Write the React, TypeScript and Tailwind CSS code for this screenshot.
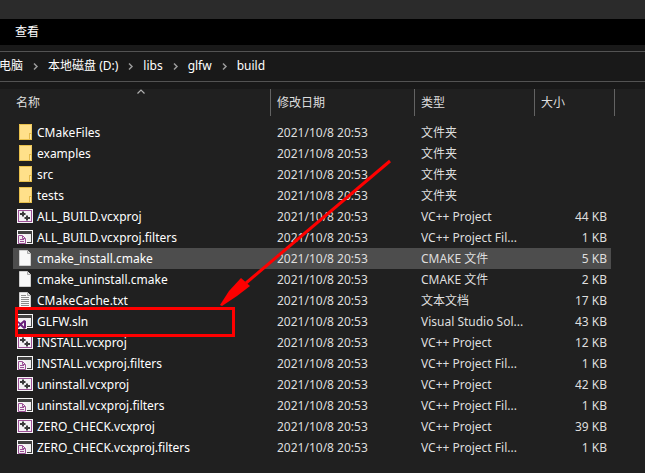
import React from 'react'

type FileKind = 'folder' | 'project' | 'filters' | 'blank' | 'text' | 'solution'

type FileEntry = {
  name: string
  kind: FileKind
  type: string
  size?: string
  hovered?: boolean
}

const MODIFIED = '2021/10/8 20:53'

const files: FileEntry[] = [
  { name: 'CMakeFiles', kind: 'folder', type: '文件夹' },
  { name: 'examples', kind: 'folder', type: '文件夹' },
  { name: 'src', kind: 'folder', type: '文件夹' },
  { name: 'tests', kind: 'folder', type: '文件夹' },
  { name: 'ALL_BUILD.vcxproj', kind: 'project', type: 'VC++ Project', size: '44 KB' },
  { name: 'ALL_BUILD.vcxproj.filters', kind: 'filters', type: 'VC++ Project Fil...', size: '1 KB' },
  { name: 'cmake_install.cmake', kind: 'blank', type: 'CMAKE 文件', size: '5 KB', hovered: true },
  { name: 'cmake_uninstall.cmake', kind: 'blank', type: 'CMAKE 文件', size: '2 KB' },
  { name: 'CMakeCache.txt', kind: 'text', type: '文本文档', size: '17 KB' },
  { name: 'GLFW.sln', kind: 'solution', type: 'Visual Studio Sol...', size: '43 KB' },
  { name: 'INSTALL.vcxproj', kind: 'project', type: 'VC++ Project', size: '12 KB' },
  { name: 'INSTALL.vcxproj.filters', kind: 'filters', type: 'VC++ Project Fil...', size: '1 KB' },
  { name: 'uninstall.vcxproj', kind: 'project', type: 'VC++ Project', size: '42 KB' },
  { name: 'uninstall.vcxproj.filters', kind: 'filters', type: 'VC++ Project Fil...', size: '1 KB' },
  { name: 'ZERO_CHECK.vcxproj', kind: 'project', type: 'VC++ Project', size: '39 KB' },
  { name: 'ZERO_CHECK.vcxproj.filters', kind: 'filters', type: 'VC++ Project Fil...', size: '1 KB' },
]

const crumbs = ['电脑', '本地磁盘 (D:)', 'libs', 'glfw', 'build']

function FileIcon({ kind }: { kind: FileKind }) {
  return (
    <svg className="mb-px size-4 shrink-0" viewBox="0 0 16 16" aria-hidden="true">
      {kind === 'folder' && (
        <>
          <rect x="2" y="0" width="13" height="16" fill="#e8c04c" />
          <rect x="3" y="1" width="11" height="14" fill="#ffe08a" />
          <path d="M12 15V9h2v6z" fill="#e3b94b" />
          <path d="M13 15v-5h1v5z" fill="#ffe9a6" />
          <path d="M14 0h1v9h-1z" fill="#f0cb60" />
        </>
      )}
      {kind === 'project' && (
        <>
          <rect y="1" width="16" height="14" fill="#f5f3f6" />
          <rect x="1.5" y="2.5" width="13" height="11" fill="#f3f0f4" stroke="#9b4f96" />
          <path d="M3 6h5.500M6 3.500v5M7.500 10H13M10 7.500v5" fill="none" stroke="#3a3a3c" strokeWidth="2" />
        </>
      )}
      {kind === 'filters' && (
        <>
          <rect y="1" width="16" height="14" fill="#f6f6f6" />
          <rect x="1" y="2" width="14" height="12" fill="#424242" />
          <rect x="1" y="5" width="13" height="8" fill="#f0eff1" />
          <path d="M0 5h7l3 3v7H0z" fill="#f6f6f6" />
          <path d="M1.5 6.5h4l3 3v5h-7z" fill="#f0eff1" stroke="#9b4f96" />
          <path d="M5.5 7v2.500H8M3 10.5h4M3 12.5h4" fill="none" stroke="#9b4f96" />
        </>
      )}
      {(kind === 'blank' || kind === 'text') && (
        <>
          <path d="M2.5.5h8l3 3v12h-11z" fill="#f8f8f8" stroke="#cfcfcf" />
          <path d="M10.5.5v3h3" fill="#dedede" stroke="#a8a8a8" />
        </>
      )}
      {kind === 'text' && (
        <path d="M4 3.5h5M4 5.5h8M4 7.5h8M4 9.5h8M4 11.5h8M4 13.5h8" stroke="#8c8c8c" />
      )}
      {kind === 'solution' && (
        <>
          <rect y="1" width="16" height="14" fill="#f6f6f6" />
          <rect x="1" y="2" width="14" height="12" fill="#424242" />
          <rect x="1" y="5" width="13" height="8" fill="#f0eff1" />
          <path d="M0 7h8l2 1v8H0z" fill="#f6f6f6" />
          <path
            d="M7 7l2 1v7l-2 1-3.500-3L1 15l-1-.5v-6L1 8l2.500 2zM7 9.500L5 11.500l2 2zM1 10v3l1.500-1.500z"
            fill="#68217a"
            fillRule="evenodd"
          />
        </>
      )}
    </svg>
  )
}

function Breadcrumbs() {
  return (
    <nav className="-ml-px flex h-[31px] items-center border-y border-[#535353] pb-px text-white">
      {crumbs.map((crumb, i) => (
        <React.Fragment key={crumb}>
          {i > 0 && (
            <svg className="mx-2 size-[9px] shrink-0" viewBox="0 0 9 9" aria-hidden="true">
              <path d="M3 1.500l3 3-3 3" fill="none" stroke="#9a9a9a" strokeWidth="1.500" />
            </svg>
          )}
          <button type="button" className="whitespace-nowrap">{crumb}</button>
        </React.Fragment>
      ))}
    </nav>
  )
}

function ColumnHeader({ label, sorted }: { label: string; sorted?: boolean }) {
  return (
    <th className="p-0 align-top font-normal">
      <button
        type="button"
        className={`relative flex h-[27px] w-full items-center border-r border-[#636363] text-left ${sorted ? 'pl-[3px]' : 'pl-[6px]'}`}
      >
        {label}
        {sorted && (
          <svg className="absolute left-1/2 top-0 h-[5px] w-2 -translate-x-1/2" viewBox="0 0 8 5" aria-hidden="true">
            <path d="M.5 4.500L4 1l3.500 3.500" fill="none" stroke="#b0b0b0" strokeWidth="1.200" />
          </svg>
        )}
      </button>
    </th>
  )
}

function FileTable() {
  return (
    <div className="pl-[13px] pr-[30px]">
      <table className="w-full table-fixed border-collapse text-[#dedede]">
        <colgroup>
          <col />
          <col className="w-[144px]" />
          <col className="w-[120px]" />
          <col className="w-[76px]" />
          <col className="w-[4px]" />
        </colgroup>
        <thead>
          <tr className="h-[33px]">
            <ColumnHeader label="名称" sorted />
            <ColumnHeader label="修改日期" />
            <ColumnHeader label="类型" />
            <th colSpan={2} className="p-0 align-top font-normal">
              <button type="button" className="flex h-[27px] w-full items-center border-r border-[#636363] pl-[6px] text-left">
                大小
              </button>
            </th>
          </tr>
        </thead>
        <tbody>
          {files.map((file) => {
            const cell = `p-0 whitespace-nowrap ${file.hovered ? 'bg-[#4d4d4d]' : ''}`
            return (
              <tr key={file.name} className="h-[21px] leading-[21px]">
                <td className={cell}>
                  <div className="flex h-[21px] items-center gap-1 pl-1 text-white">
                    <FileIcon kind={file.kind} />
                    {file.name}
                  </div>
                </td>
                <td className={`${cell} pl-[6px]`}>{MODIFIED}</td>
                <td className={`${cell} pl-[6px]`}>{file.type}</td>
                <td className={`${cell} pr-1 text-right`}>{file.size}</td>
                <td className="p-0" />
              </tr>
            )
          })}
        </tbody>
      </table>
    </div>
  )
}

// Red box and arrow drawn over the solution file
function Annotation() {
  return (
    <svg className="pointer-events-none absolute left-0 top-0" width="400" height="345" aria-hidden="true">
      <rect x="16.500" y="308.500" width="217" height="27" fill="none" stroke="#f00" strokeWidth="3" />
      <path d="M390 161L246 283" stroke="#f00" strokeWidth="3" />
      <path d="M220 305L229 291L241 278L250 286L237 296L222 306z" fill="#f00" />
    </svg>
  )
}

export default function App() {
  return (
    <main className="relative min-h-screen bg-[#202020] font-['Noto_Sans','Noto_Sans_CJK_SC',sans-serif] text-[12px] leading-4">
      <div className="h-[19px] bg-[#2b2b2b]" />
      <div className="flex h-[26px] items-center bg-black px-[15px] text-white">
        <button type="button">查看</button>
      </div>
      <div className="bg-[#191919] pb-[7px] pt-[6px]">
        <Breadcrumbs />
      </div>
      <FileTable />
      <Annotation />
    </main>
  )
}
